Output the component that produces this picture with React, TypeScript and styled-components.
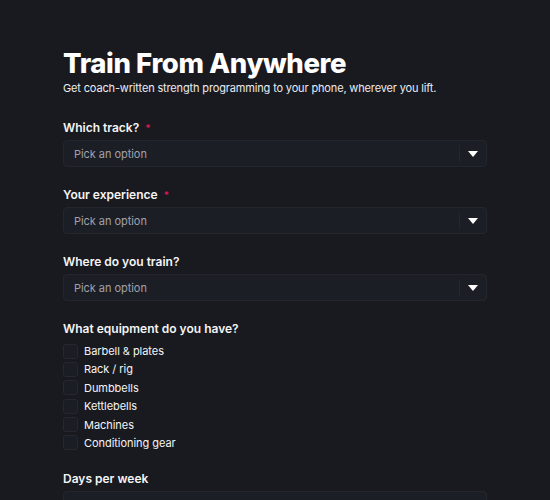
import React from "react";
import styled, { createGlobalStyle } from "styled-components";

const GlobalStyle = createGlobalStyle`
  html, body {
    margin: 0;
    padding: 0;
    background: #181a20;
  }
  body {
    font-family: Inter, "Noto Sans", sans-serif;
    color: #f4f4f5;
  }
`;

const Page = styled.div`
  min-height: 500px;
  background: #181a20;
  padding: 45px 0 0;
  box-sizing: border-box;
`;

const Form = styled.form`
  width: 424px;
  margin: 0 auto;
  display: flex;
  flex-direction: column;
`;

const Title = styled.h1`
  margin: 0;
  font-size: 27.5px;
  line-height: 36px;
  font-weight: 800;
  letter-spacing: -0.4px;
  color: #ffffff;
`;

const Subtitle = styled.p`
  margin: 0 0 24px;
  font-size: 11px;
  line-height: 15px;
  letter-spacing: -0.15px;
  color: #ececf0;
`;

const Field = styled.div`
  display: flex;
  flex-direction: column;
  gap: 4px;
  margin-bottom: 20px;
`;

const Label = styled.label`
  display: flex;
  align-items: center;
  gap: 6px;
  font-size: 12px;
  line-height: 16px;
  font-weight: 600;
  color: #f4f4f5;
`;

const Required = styled.span`
  color: #d81b5a;
  font-size: 10px;
  line-height: 1;
`;

const SelectBox = styled.div`
  height: 27px;
  display: flex;
  align-items: stretch;
  background: #1c1e25;
  border: 1px solid #24262e;
  border-radius: 4px;
  box-sizing: border-box;
`;

const Placeholder = styled.span`
  flex: 1;
  display: flex;
  align-items: center;
  padding-left: 10px;
  font-size: 11px;
  letter-spacing: -0.05px;
  color: #a1a1aa;
`;

const CaretCell = styled.span`
  width: 26px;
  display: flex;
  align-items: center;
  justify-content: center;
  border-left: 1px solid #24262e;
  margin: 4px 0;
`;

const Caret = () => (
  <svg width="10" height="6" viewBox="0 0 10 6">
    <path d="M0 0 L10 0 L5 6 Z" fill="#ffffff" />
  </svg>
);

const CheckList = styled.div`
  display: flex;
  flex-direction: column;
  gap: 2.4px;
  margin-top: 2px;
`;

const CheckRow = styled.label`
  display: flex;
  align-items: center;
  gap: 6px;
  font-size: 11px;
  line-height: 16px;
  letter-spacing: -0.05px;
  color: #f4f4f5;
`;

const Box = styled.span`
  width: 15px;
  height: 15px;
  box-sizing: border-box;
  border: 1px solid #262830;
  background: #1b1d24;
  border-radius: 3px;
`;

const Select = ({ label, required }: { label: string; required?: boolean }) => (
  <Field>
    <Label>
      {label}
      {required && <Required>*</Required>}
    </Label>
    <SelectBox>
      <Placeholder>Pick an option</Placeholder>
      <CaretCell>
        <Caret />
      </CaretCell>
    </SelectBox>
  </Field>
);

const equipment = [
  "Barbell & plates",
  "Rack / rig",
  "Dumbbells",
  "Kettlebells",
  "Machines",
  "Conditioning gear",
];

export default function App() {
  return (
    <Page>
      <GlobalStyle />
      <Form>
        <Title>Train From Anywhere</Title>
        <Subtitle>
          Get coach-written strength programming to your phone, wherever you lift.
        </Subtitle>
        <Select label="Which track?" required />
        <Select label="Your experience" required />
        <Select label="Where do you train?" />
        <Field>
          <Label>What equipment do you have?</Label>
          <CheckList>
            {equipment.map((item) => (
              <CheckRow key={item}>
                <Box />
                {item}
              </CheckRow>
            ))}
          </CheckList>
        </Field>
        <Field>
          <Label>Days per week</Label>
          <SelectBox>
            <Placeholder />
          </SelectBox>
        </Field>
      </Form>
    </Page>
  );
}
